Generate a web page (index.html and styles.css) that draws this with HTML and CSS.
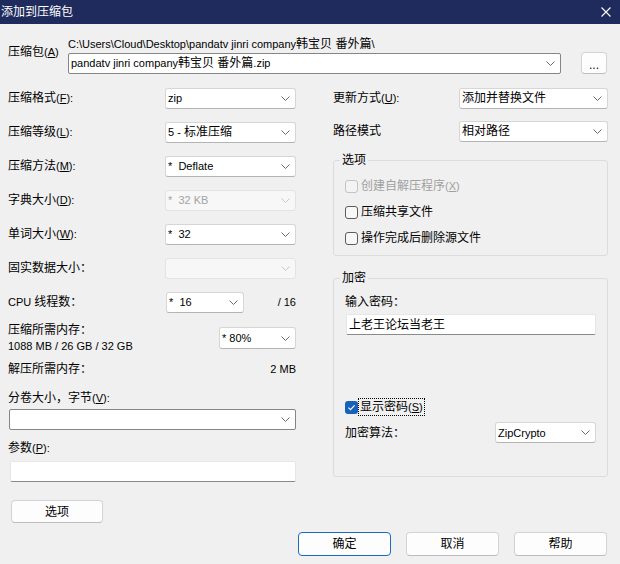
FILE: index.html
```html
<!DOCTYPE html>
<html lang="zh-CN">
<head>
<meta charset="utf-8">
<title>添加到压缩包</title>
<link rel="stylesheet" href="styles.css">
</head>
<body>
<div class="titlebar">
  <span class="title">添加到压缩包</span>
  <svg class="close" width="10" height="10" viewBox="0 0 10 10"><path d="M0.5 0.5 L9.5 9.5 M9.5 0.5 L0.5 9.5" stroke="#fff" stroke-width="1.1" fill="none"/></svg>
</div>

<div class="archive">
  <div class="archive-label">压缩包<span class="en">(<u>A</u>)</span></div>
  <div class="archive-main">
    <div class="path"><span class="en">C:\Users\Cloud\Desktop\pandatv jinri company</span>韩宝贝 番外篇<span class="en">\</span></div>
    <div class="archive-row">
      <div class="combo edit wide"><span class="val"><span class="en">pandatv jinri company</span>韩宝贝 番外篇<span class="en">.zip</span></span><svg class="chev" width="9" height="5" viewBox="0 0 9 5"><path d="M0.5 0.5 L4.5 4.5 L8.5 0.5" stroke="#6a6a6a" fill="none"/></svg></div>
      <button class="btn browse">...</button>
    </div>
  </div>
</div>

<div class="columns">
  <div class="left">
    <div class="row"><span class="lbl">压缩格式<span class="en">(<u>F</u>):</span></span><div class="combo std"><span class="val en">zip</span><svg class="chev" width="9" height="5" viewBox="0 0 9 5"><path d="M0.5 0.5 L4.5 4.5 L8.5 0.5" stroke="#6a6a6a" fill="none"/></svg></div></div>
    <div class="row"><span class="lbl">压缩等级<span class="en">(<u>L</u>):</span></span><div class="combo std"><span class="val"><span class="en">5 - </span>标准压缩</span><svg class="chev" width="9" height="5" viewBox="0 0 9 5"><path d="M0.5 0.5 L4.5 4.5 L8.5 0.5" stroke="#6a6a6a" fill="none"/></svg></div></div>
    <div class="row"><span class="lbl">压缩方法<span class="en">(<u>M</u>):</span></span><div class="combo std"><span class="val en">*&nbsp; Deflate</span><svg class="chev" width="9" height="5" viewBox="0 0 9 5"><path d="M0.5 0.5 L4.5 4.5 L8.5 0.5" stroke="#6a6a6a" fill="none"/></svg></div></div>
    <div class="row"><span class="lbl">字典大小<span class="en">(<u>D</u>):</span></span><div class="combo std disabled"><span class="val en">*&nbsp; 32 KB</span><svg class="chev" width="9" height="5" viewBox="0 0 9 5"><path d="M0.5 0.5 L4.5 4.5 L8.5 0.5" stroke="#c8c8c8" fill="none"/></svg></div></div>
    <div class="row"><span class="lbl">单词大小<span class="en">(<u>W</u>):</span></span><div class="combo std"><span class="val en">*&nbsp; 32</span><svg class="chev" width="9" height="5" viewBox="0 0 9 5"><path d="M0.5 0.5 L4.5 4.5 L8.5 0.5" stroke="#6a6a6a" fill="none"/></svg></div></div>
    <div class="row"><span class="lbl">固实数据大小：</span><div class="combo std disabled"><span class="val"></span><svg class="chev" width="9" height="5" viewBox="0 0 9 5"><path d="M0.5 0.5 L4.5 4.5 L8.5 0.5" stroke="#c8c8c8" fill="none"/></svg></div></div>
    <div class="row"><span class="lbl fixed"><span class="en">CPU </span>线程数：</span><div class="combo cpu"><span class="val en">*&nbsp; 16</span><svg class="chev" width="9" height="5" viewBox="0 0 9 5"><path d="M0.5 0.5 L4.5 4.5 L8.5 0.5" stroke="#6a6a6a" fill="none"/></svg></div><span class="threads en">/ 16</span></div>
    <div class="row mem"><span class="lbl">压缩所需内存：<br><span class="en">1088 MB / 26 GB / 32 GB</span></span><div class="combo pct"><span class="val en">* 80%</span><svg class="chev" width="9" height="5" viewBox="0 0 9 5"><path d="M0.5 0.5 L4.5 4.5 L8.5 0.5" stroke="#6a6a6a" fill="none"/></svg></div></div>
    <div class="row dec"><span class="lbl">解压所需内存：</span><span class="num en">2 MB</span></div>
    <div class="vol-label">分卷大小，字节<span class="en">(<u>V</u>):</span></div>
    <div class="combo edit vol"><span class="val"></span><svg class="chev" width="9" height="5" viewBox="0 0 9 5"><path d="M0.5 0.5 L4.5 4.5 L8.5 0.5" stroke="#6a6a6a" fill="none"/></svg></div>
    <div class="param-label">参数<span class="en">(<u>P</u>):</span></div>
    <div class="textbox param"></div>
    <button class="btn opts">选项</button>
  </div>

  <div class="right">
    <div class="row r1"><span class="lbl">更新方式<span class="en">(<u>U</u>):</span></span><div class="combo upd"><span class="val">添加并替换文件</span><svg class="chev" width="9" height="5" viewBox="0 0 9 5"><path d="M0.5 0.5 L4.5 4.5 L8.5 0.5" stroke="#6a6a6a" fill="none"/></svg></div></div>
    <div class="row r2"><span class="lbl">路径模式</span><div class="combo upd"><span class="val">相对路径</span><svg class="chev" width="9" height="5" viewBox="0 0 9 5"><path d="M0.5 0.5 L4.5 4.5 L8.5 0.5" stroke="#6a6a6a" fill="none"/></svg></div></div>

    <fieldset class="group g1">
      <legend>选项</legend>
      <div class="check disabled first"><svg width="13" height="13" viewBox="0 0 13 13"><rect x="0.5" y="0.5" width="12" height="12" rx="2.5" fill="#f3f3f3" stroke="#c4c4c4"/></svg><span>创建自解压程序<span class="en">(<u>X</u>)</span></span></div>
      <div class="check"><svg width="13" height="13" viewBox="0 0 13 13"><rect x="0.5" y="0.5" width="12" height="12" rx="2.5" fill="#f7f7f7" stroke="#5c5c5c"/></svg><span>压缩共享文件</span></div>
      <div class="check"><svg width="13" height="13" viewBox="0 0 13 13"><rect x="0.5" y="0.5" width="12" height="12" rx="2.5" fill="#f7f7f7" stroke="#5c5c5c"/></svg><span>操作完成后删除源文件</span></div>
    </fieldset>

    <fieldset class="group g2">
      <legend>加密</legend>
      <div class="pw-label">输入密码：</div>
      <div class="textbox pw">上老王论坛当老王</div>
      <div class="check show"><svg width="13" height="13" viewBox="0 0 13 13"><rect x="0" y="0" width="13" height="13" rx="3" fill="#1762b8"/><path d="M3.4 6.7 L5.5 8.7 L9.6 4.4" stroke="#fff" stroke-width="1.1" fill="none"/></svg><span class="focus">显示密码<span class="en">(<u>S</u>)</span></span></div>
      <div class="algo"><span class="lbl">加密算法：</span><div class="combo alg"><span class="val en">ZipCrypto</span><svg class="chev" width="9" height="5" viewBox="0 0 9 5"><path d="M0.5 0.5 L4.5 4.5 L8.5 0.5" stroke="#6a6a6a" fill="none"/></svg></div></div>
    </fieldset>
  </div>
</div>

<div class="actions">
  <button class="btn act default">确定</button>
  <button class="btn act">取消</button>
  <button class="btn act">帮助</button>
</div>
</body>
</html>
```

FILE: styles.css
```css
* { box-sizing: border-box; }
html, body { margin: 0; padding: 0; }
body {
  width: 620px;
  height: 564px;
  overflow: hidden;
  background: #f0f0f0;
  color: #000;
  font-family: "Liberation Sans", "Noto Sans CJK SC", sans-serif;
  font-size: 12px;
  line-height: 16px;
}
.en { font-family: "Liberation Sans", "Noto Sans CJK SC", sans-serif; font-size: 11px; }
u { text-decoration: underline; text-underline-offset: 1px; }

.titlebar {
  height: 24px;
  background: #1e2b5c;
  color: #fff;
  display: flex;
  align-items: center;
  justify-content: space-between;
  padding: 0 9px 0 1px;
}
.close { display: block; }

.archive { display: flex; padding: 12px 13px 0 8px; }
.archive-label { width: 60px; padding-top: 8px; }
.archive-main { flex: 1; }
.path { white-space: nowrap; }
.archive-row { display: flex; align-items: center; height: 22px; }

.combo {
  display: flex;
  align-items: center;
  height: 21px;
  background: #fff;
  border: 1px solid #d6d6d6;
  border-bottom-color: #b4b4b4;
  border-radius: 3px;
  padding: 0 5px 0 2px;
  white-space: nowrap;
}
.combo .val { flex: 1; overflow: hidden; }
.chev { display: block; flex: none; }
.combo.edit { border: 1px solid #858585; border-radius: 2px; }
.combo.disabled { background: #f7f7f7; border-color: #e3e3e3; color: #a3a3a3; }
.combo.wide { width: 493px; }

.btn {
  font: inherit;
  color: #000;
  background: #fdfdfd;
  border: 1px solid #d3d3d3;
  border-bottom-color: #bdbdbd;
  border-radius: 4px;
  padding: 0;
  line-height: 16px;
}
.browse { margin-left: 20px; width: 26px; height: 22px; padding-top: 3px; }

.columns {
  display: grid;
  grid-template-columns: 288px 275px;
  column-gap: 37px;
  padding-left: 8px;
  margin-top: 7px;
}
.row { display: flex; align-items: center; height: 34px; }
.row .lbl { flex: 1; }
.row .lbl.fixed { flex: none; width: 158px; }
.combo.std { width: 131px; }
.combo.cpu { width: 78px; }
.threads { flex: 1; text-align: right; padding-right: 0; }
.row.mem { height: 38px; }
.combo.pct { width: 77px; height: 22px; }
.row.dec { height: 24px; }
.num { text-align: right; }
.vol-label { margin-top: 9px; }
.combo.vol { margin-top: 3px; margin-left: 1px; }
.param-label { margin-top: 10px; }
.textbox {
  height: 21px;
  background: #fff;
  border: 1px solid #e6e6e6;
  border-bottom-color: #8a8a8a;
  border-radius: 2px;
  padding: 1px 2px 0;
}
.textbox.param { margin-top: 5px; margin-left: 2px; }
.opts { display: block; margin-top: 18px; margin-left: 3px; width: 92px; height: 23px; }

.row.r2 { height: 32px; }
.combo.upd { width: 149px; }

.group {
  margin: 5px 0 0;
  padding: 0 11px 4px 11px;
  border: 1px solid #dcdcdc;
  border-radius: 3px;
  min-width: 0;
}
.group legend { padding: 0 2px; margin-left: -5px; line-height: 16px; }
.check { display: flex; align-items: center; height: 26px; gap: 3px; }
.check svg { display: block; flex: none; }
.check.first { margin-top: 5px; }
.check.disabled { color: #a0a0a0; }

.g2 { margin-top: 14px; padding-bottom: 33px; }
.pw-label { margin-top: 8px; }
.textbox.pw { margin-top: 4px; margin-left: 1px; width: 250px; padding-left: 2px; line-height: 18px; }
.check.show { height: 16px; margin-top: 64px; gap: 1px; }
.focus { outline: 1px dotted #000; outline-offset: 0; padding: 0 1px; }
.algo { display: flex; align-items: center; height: 21px; margin-top: 7px; }
.algo .lbl { flex: 1; }
.combo.alg { width: 101px; }

.actions {
  display: flex;
  justify-content: flex-end;
  gap: 15px;
  padding-right: 13px;
  margin-top: 9px;
}
.act { width: 93px; height: 24px; }
.act.default { border: 1px solid #1a6cc4; }
```
